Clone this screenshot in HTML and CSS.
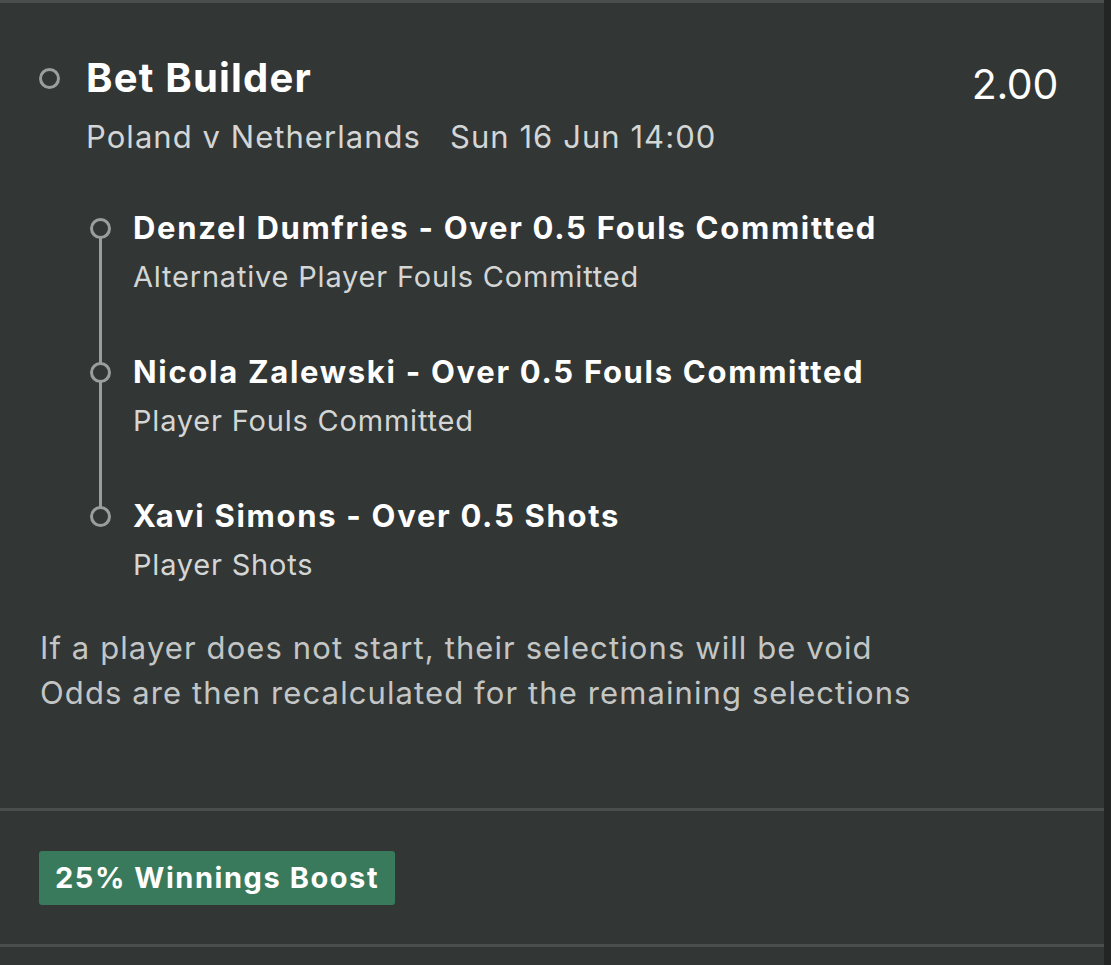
FILE: index.html
```html
<!DOCTYPE html>
<html lang="en">
<head>
<meta charset="utf-8">
<title>Bet Builder</title>
<link rel="stylesheet" href="styles.css">
</head>
<body>
<main class="slip">
  <section class="bet">
    <div class="bet-head">
      <span class="dot dot-main"></span>
      <div class="bet-info">
        <h1 class="bet-title">Bet Builder</h1>
        <p class="bet-event"><span>Poland v Netherlands</span><span>Sun 16 Jun 14:00</span></p>
      </div>
      <div class="odds">2.00</div>
    </div>
    <ul class="legs">
      <li class="leg">
        <span class="dot"></span>
        <div class="leg-text">
          <div class="leg-title">Denzel Dumfries - Over 0.5 Fouls Committed</div>
          <div class="leg-market">Alternative Player Fouls Committed</div>
        </div>
      </li>
      <li class="leg">
        <span class="dot"></span>
        <div class="leg-text">
          <div class="leg-title">Nicola Zalewski - Over 0.5 Fouls Committed</div>
          <div class="leg-market">Player Fouls Committed</div>
        </div>
      </li>
      <li class="leg">
        <span class="dot"></span>
        <div class="leg-text">
          <div class="leg-title">Xavi Simons - Over 0.5 Shots</div>
          <div class="leg-market">Player Shots</div>
        </div>
      </li>
    </ul>
    <p class="note">If a player does not start, their selections will be void<br>Odds are then recalculated for the remaining selections</p>
  </section>
  <section class="promo">
    <span class="badge">25% Winnings Boost</span>
  </section>
</main>
</body>
</html>
```

FILE: styles.css
```css
html, body {
  margin: 0;
  padding: 0;
}
body {
  background: #232424;
  font-family: Inter, "Noto Sans", "Liberation Sans", sans-serif;
  color: #ffffff;
  min-height: 965px;
}
.slip {
  width: 1104px;
  min-height: 965px;
  background: #323635;
  border-top: 3px solid #4a4e4d;
  box-sizing: border-box;
}
.bet {
  padding: 52px 0 93px 0;
  border-bottom: 3px solid #4a4e4d;
}
.bet-head {
  display: flex;
  align-items: flex-start;
  padding: 0 46px 0 39px;
}
.dot {
  flex: none;
  width: 21px;
  height: 21px;
  box-sizing: border-box;
  border: 3px solid #9c9e9d;
  border-radius: 50%;
  background: #323635;
  position: relative;
  z-index: 1;
}
.dot-main {
  margin-top: 13px;
}
.bet-info {
  flex: 1;
  margin-left: 26px;
}
.bet-title {
  margin: 0;
  font-size: 40px;
  line-height: 46px;
  font-weight: 700;
  letter-spacing: 1.2px;
}
.bet-event {
  margin: 16px 0 0 0;
  font-size: 31px;
  line-height: 40px;
  color: #d4d6d5;
  letter-spacing: 1.05px;
  display: flex;
  gap: 29px;
}
.odds {
  font-size: 41px;
  line-height: 46px;
  margin-top: 6px;
  letter-spacing: -0.3px;
}
.legs {
  list-style: none;
  margin: 53px 0 0 0;
  padding: 0 0 0 90px;
  display: flex;
  flex-direction: column;
  gap: 59px;
  position: relative;
}
.legs::before {
  content: "";
  position: absolute;
  left: 99px;
  top: 18px;
  bottom: 68px;
  width: 3px;
  background: #9c9e9d;
}
.leg {
  display: flex;
  align-items: flex-start;
}
.leg .dot {
  margin-top: 8px;
}
.leg-text {
  margin-left: 22px;
}
.leg-title {
  font-size: 31px;
  line-height: 36px;
  font-weight: 700;
  letter-spacing: 1.7px;
}
.leg-market {
  margin-top: 13px;
  font-size: 29px;
  line-height: 36px;
  color: #d4d6d5;
  letter-spacing: 0.8px;
}
.note {
  margin: 42px 0 0 40px;
  font-size: 31px;
  line-height: 45px;
  color: #c4c6c5;
  letter-spacing: 1.1px;
}
.promo {
  padding: 40px 0 39px 39px;
  border-bottom: 3px solid #4a4e4d;
}
.badge {
  display: inline-block;
  background: #3a7a5c;
  color: #ffffff;
  font-weight: 700;
  font-size: 29px;
  line-height: 54px;
  height: 54px;
  padding: 0 16px;
  letter-spacing: 1.55px;
  border-radius: 3px;
}
```
